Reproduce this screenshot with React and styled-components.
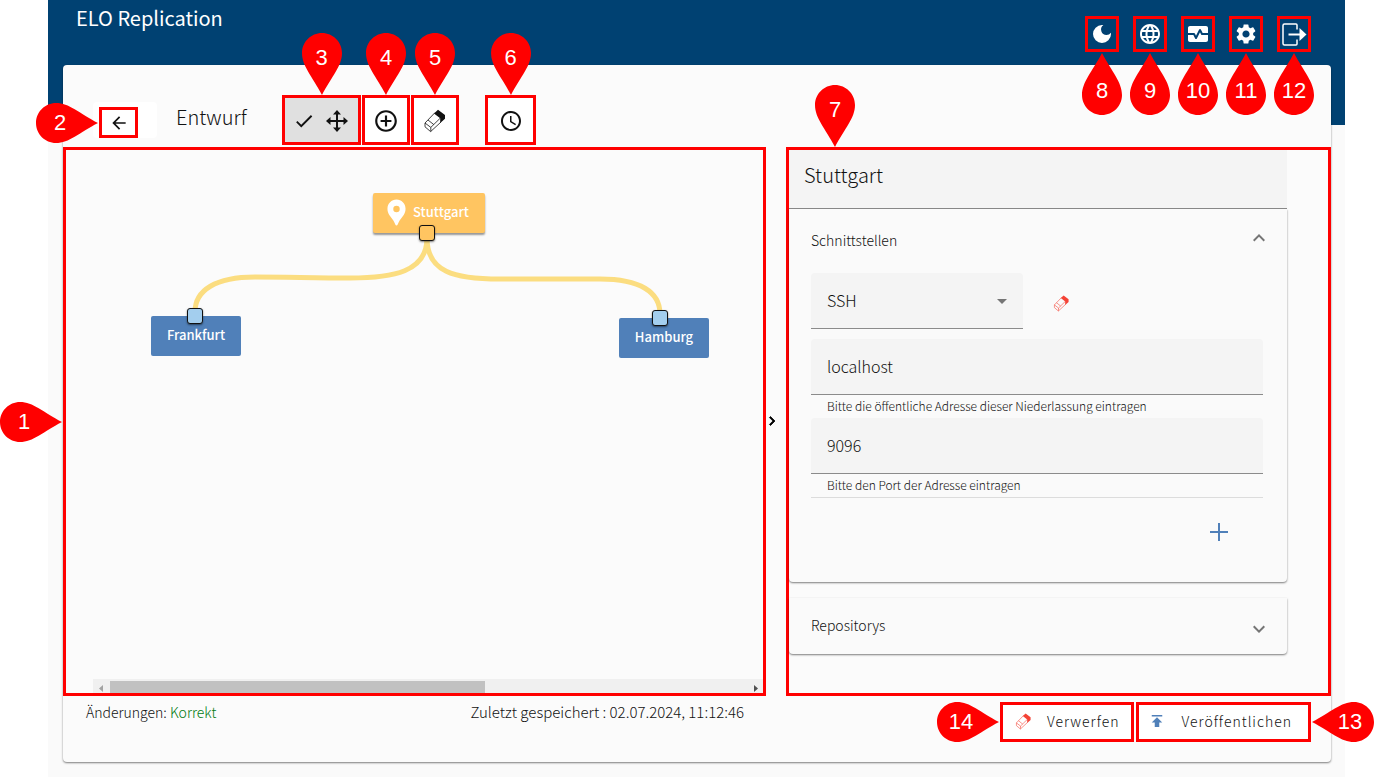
import React, { useState } from "react";
import styled, { createGlobalStyle, css } from "styled-components";
import {
  MdAddCircleOutline,
  MdArrowBack,
  MdArrowDropDown,
  MdCheck,
  MdChevronRight,
  MdDarkMode,
  MdExpandLess,
  MdExpandMore,
  MdLanguage,
  MdLocationPin,
  MdMonitorHeart,
  MdPublish,
  MdSchedule,
  MdSettings,
} from "react-icons/md";

const GlobalStyle = createGlobalStyle`
  *, *::before, *::after {
    box-sizing: border-box;
  }
  body {
    margin: 0;
    background: #fff;
    color: #111;
    font-family: "Noto Sans CJK SC", "Open Sans", sans-serif;
    font-size: 14px;
    font-weight: 300;
    line-height: 20px;
  }
  h1, h2 {
    margin: 0;
    font-weight: 400;
  }
  button, input, select {
    font: inherit;
    color: inherit;
  }
  svg {
    display: block;
  }
`;

const red = "#ff0000";

/* ---------- numbered markers ---------- */

const frame = css`
  position: relative;
  border: 3px solid ${red};
`;

const pinPlace = {
  down: css`
    left: ${(p) => p.$at || "50%"};
    bottom: 100%;
    margin: 0 0 3px -20px;
  `,
  up: css`
    left: ${(p) => p.$at || "50%"};
    top: 100%;
    margin: 4px 0 0 -20px;
  `,
  right: css`
    right: 100%;
    top: 50%;
    margin: -20px 4px 0 0;
  `,
  left: css`
    left: 100%;
    top: 50%;
    margin: -20px 0 0 4px;
  `,
};

const PinStyled = styled.span`
  position: absolute;
  z-index: 2;
  pointer-events: none;
  ${(p) => pinPlace[p.$point]}
`;

const PinNumber = styled.span`
  position: absolute;
  inset: 0;
  display: flex;
  align-items: center;
  justify-content: center;
  padding: ${(p) =>
    ({
      down: "0 0 12px",
      up: "14px 0 0",
      right: "0 14px 0 0",
      left: "0 0 0 14px",
    })[p.$point]};
  color: #fff;
  font: 22px/24px "Liberation Sans", Arial, sans-serif;
  letter-spacing: 0;
`;

const turn = {
  down: "",
  up: "rotate(180 20 31)",
  right: "translate(0 40) rotate(-90)",
  left: "translate(62 0) rotate(90)",
};

const Pin = ({ n, point, at }) => {
  const flat = point === "left" || point === "right";
  return (
    <PinStyled $point={point} $at={at}>
      <svg width={flat ? 62 : 40} height={flat ? 40 : 62} aria-hidden="true">
        <path
          fill={red}
          transform={turn[point] || undefined}
          d="M20 0C31 0 40 9 40 20C40 33 30 43 20 62C10 43 0 33 0 20C0 9 9 0 20 0Z"
        />
      </svg>
      <PinNumber $point={point}>{n}</PinNumber>
    </PinStyled>
  );
};

/* ---------- icons ---------- */

const Eraser = ({ size = 22, color = "currentColor" }) => (
  <svg width={size} height={size} viewBox="0 0 22 24" aria-hidden="true">
    <path
      d="M11 3.6L1 14V17.8L6.6 22.6L17 13M1 14L6.8 18.4L16.4 9M6.8 18.4V22.4M4 11L9.8 15.6"
      fill="none"
      stroke={color}
      strokeWidth="0.8"
      strokeLinejoin="round"
    />
    <path d="M14 .8L10 4.4L16.2 9.2V14L21 9.8V6Z" fill={color} />
  </svg>
);

const Move = () => (
  <svg width="22" height="22" viewBox="0 0 22 22" aria-hidden="true">
    <path d="M11 2V20M2 11H20" stroke="currentColor" strokeWidth="2" />
    <path
      d="M11 0L15 4.5H7ZM11 22L7 17.5H15ZM0 11L4.5 7V15ZM22 11L17.5 15V7Z"
      fill="currentColor"
    />
  </svg>
);

const Logout = () => (
  <svg width="25" height="23" viewBox="0 0 25 23" aria-hidden="true">
    <path
      d="M15 6.5V2Q15 1 14 1H2.5Q1 1 1 2.5V20.5Q1 22 2.5 22H14Q15 22 15 21V16.5"
      fill="none"
      stroke="currentColor"
      strokeWidth="1.5"
    />
    <path d="M6.5 11.5H19" stroke="currentColor" strokeWidth="2" />
    <path d="M17.5 5L24.5 11.5L17.5 18Z" fill="currentColor" />
  </svg>
);

const Plus = () => (
  <svg width="18" height="18" viewBox="0 0 18 18" aria-hidden="true">
    <path d="M9 0V18M0 9H18" stroke="currentColor" strokeWidth="2" />
  </svg>
);

/* ---------- page frame ---------- */

const Shell = styled.div`
  min-height: 100vh;
  margin: 0 30px 0 48px;
  background: #fafafa;
`;

const Header = styled.header`
  display: flex;
  align-items: flex-start;
  justify-content: space-between;
  height: 125px;
  padding: 0 34px 0 28px;
  background: #004172;
  color: #fff;
`;

const AppTitle = styled.h1`
  padding-top: 4px;
  font-size: 20px;
  line-height: 28px;
`;

const HeaderActions = styled.nav`
  display: flex;
  gap: 14px;
  padding-top: 16px;
`;

const HeaderButton = styled.button`
  ${frame}
  z-index: 1;
  display: flex;
  align-items: center;
  justify-content: center;
  width: 34px;
  height: 36px;
  padding: 0;
  background: none;
  color: #fff;
`;

const Card = styled.main`
  display: flex;
  flex-direction: column;
  min-height: calc(100vh - 80px);
  margin: -60px 14px 0 15px;
  padding-top: 30px;
  border-radius: 4px;
  background: #fbfbfb;
  box-shadow: 0 1px 2px rgba(0, 0, 0, 0.5);
`;

const Toolbar = styled.div`
  display: flex;
  align-items: flex-start;
  height: 52px;
  padding-left: 30px;
`;

const BackPlate = styled.div`
  margin: 7px 19px 0 0;
  padding: 5px 19px 0 6px;
  border-radius: 4px;
  background: #fff;
`;

const BackButton = styled.button`
  ${frame}
  display: flex;
  align-items: center;
  justify-content: center;
  width: 39px;
  height: 31px;
  padding: 0;
  background: #fff;
`;

const PageTitle = styled.h2`
  width: 105px;
  padding-top: 8px;
  font-size: 20px;
  font-weight: 300;
  line-height: 28px;
`;

const ToolButton = styled.button`
  ${frame}
  display: flex;
  align-items: center;
  justify-content: center;
  gap: 11px;
  width: ${(p) => (p.$wide ? 79 : p.$apart ? 51 : 48)}px;
  height: 50px;
  margin-left: ${(p) => (p.$apart ? 26 : 1)}px;
  padding: ${(p) => (p.$wide ? "2px 3px 0 0" : "2px 0 0")};
  background: ${(p) => (p.$active ? "#e0e0e0" : "#fff")};
`;

const split = css`
  display: grid;
  grid-template-columns: 703fr 20px 545fr;
`;

const Body = styled.div`
  ${split}
  flex: 1;
`;

/* ---------- canvas ---------- */

const CanvasPanel = styled.section`
  ${frame}
  display: flex;
  flex-direction: column;
  min-width: 0;
`;

const Canvas = styled.div`
  position: relative;
  flex: 1;
  min-height: 240px;
`;

const Wires = styled.svg`
  position: absolute;
  left: 0;
  top: 0;
`;

const Node = styled.button`
  position: absolute;
  left: ${(p) => p.$x}px;
  top: ${(p) => p.$y}px;
  display: flex;
  align-items: center;
  justify-content: center;
  gap: 1px;
  width: ${(p) => (p.$root ? 112 : 90)}px;
  height: 40px;
  padding: ${(p) => (p.$root ? "0 8px 2px 0" : "0 0 2px")};
  border: 0;
  border-radius: 2px;
  background: ${(p) => (p.$root ? "#ffc561" : "#5080b9")};
  box-shadow: ${(p) => (p.$root ? "0 2px 2px rgba(0, 0, 0, 0.4)" : "none")};
  color: #fff;
  font-size: 13px;
  font-weight: 500;
`;

const Port = styled.span`
  position: absolute;
  left: ${(p) => p.$x}px;
  top: ${(p) => p.$y}px;
  width: 16px;
  height: 16px;
  border: 1px solid #111;
  border-radius: 3px;
  background: ${(p) => (p.$root ? "#ffc561" : "#a3ceee")};
  box-shadow: 0 1px 2px rgba(0, 0, 0, 0.5);
`;

const ScrollTrack = styled.div`
  display: flex;
  align-items: center;
  height: 14px;
  margin-left: 27px;
  background: #f0f0f0;
`;

const ScrollArrow = styled.svg`
  flex: none;
  width: 17px;
  height: 13px;
  fill: ${(p) => (p.$off ? "#a3a3a3" : "#505050")};
`;

const ScrollRail = styled.div`
  flex: 1;
  padding-top: 2px;
`;

const ScrollThumb = styled.div`
  width: 59%;
  height: 12px;
  background: #c1c1c1;
`;

const Splitter = styled.button`
  display: flex;
  align-items: center;
  justify-content: center;
  padding: 0 8px 2px 0;
  border: 0;
  background: none;
  color: #000;

  svg {
    flex: none;
  }
  path:last-child {
    stroke: #000;
    stroke-width: 1;
  }
`;

/* ---------- detail panel ---------- */

const DetailPanel = styled.section`
  ${frame}
  padding-right: 41px;
  background: #fbfbfb;
`;

const fieldBox = css`
  width: 100%;
  height: 56px;
  padding: 0 16px 2px;
  border: 0;
  border-bottom: 1px solid #8b8b8b;
  border-radius: 4px 4px 0 0;
  background: #f4f4f4;
  font-size: 16px;
  outline: 0;
`;

const NameInput = styled.input`
  ${fieldBox}
  display: block;
  height: 59px;
  padding: 0 15px 9px;
  border-radius: 0;
  font-size: 20px;
`;

const Accordion = styled.div`
  margin-bottom: 16px;
  padding: 0 24px 0 22px;
  border-radius: 0 0 4px 4px;
  background: #fafafa;
  box-shadow: 0 1px 2px rgba(0, 0, 0, 0.5);
`;

const AccordionHead = styled.button`
  display: flex;
  align-items: center;
  justify-content: space-between;
  width: 100%;
  height: ${(p) => (p.$open ? 64 : 56)}px;
  padding: 0 0 2px;
  border: 0;
  background: none;
  text-align: left;

  svg {
    margin: ${(p) => (p.$open ? "0 -8px 4px 0" : "8px -8px 0 0")};
    color: #757575;
  }
`;

const InterfaceRow = styled.div`
  display: flex;
  align-items: center;
  gap: 30px;
  margin-bottom: 10px;
`;

const SelectWrap = styled.div`
  position: relative;
  width: 212px;

  svg {
    position: absolute;
    right: 9px;
    top: 16px;
    color: #757575;
    pointer-events: none;
  }
`;

const Select = styled.select`
  ${fieldBox}
  display: block;
  appearance: none;
`;

const ClearButton = styled.button`
  display: flex;
  padding: 4px 0 0;
  border: 0;
  background: none;
`;

const Field = styled.div`
  input {
    ${fieldBox}
    display: block;
  }
  label {
    display: block;
    height: 23px;
    padding: 1px 16px 0;
    font-size: 12px;
  }
`;

const AddRow = styled.div`
  display: flex;
  justify-content: flex-end;
  height: 85px;
  padding: 25px 35px 0 0;
  border-top: 1px solid #dcdcdc;
`;

const AddButton = styled.button`
  align-self: flex-start;
  padding: 0;
  border: 0;
  background: none;
  color: #5080b9;
`;

/* ---------- footer ---------- */

const Footer = styled.footer`
  ${split}
  height: 66px;
  padding-top: 6px;
`;

const Status = styled.div`
  display: flex;
  align-items: baseline;
  align-self: start;
  justify-content: space-between;
  padding: 0 22px 0 23px;
`;

const Valid = styled.span`
  color: #007a10;
`;

const Saved = styled.span`
  font-size: 15px;
`;

const FooterActions = styled.div`
  display: flex;
  grid-column: 3;
  justify-content: flex-end;
  gap: 2px;
  padding-right: 20px;
`;

const FooterButton = styled.button`
  ${frame}
  display: flex;
  align-items: center;
  gap: 15px;
  height: 40px;
  padding: ${(p) => (p.$main ? "0 16px 2px 9px" : "0 12px 2px 12px")};
  background: #fff;
  letter-spacing: 1px;
`;

const headerItems = [
  { n: 8, label: "Dunkles Design", icon: <MdDarkMode size={24} /> },
  { n: 9, label: "Sprache", icon: <MdLanguage size={24} /> },
  { n: 10, label: "Überwachung", icon: <MdMonitorHeart size={24} /> },
  { n: 11, label: "Einstellungen", icon: <MdSettings size={24} /> },
  { n: 12, label: "Abmelden", icon: <Logout /> },
];

const App = () => {
  const [name, setName] = useState("Stuttgart");
  const [address, setAddress] = useState("localhost");
  const [port, setPort] = useState("9096");

  return (
    <>
      <GlobalStyle />
      <Shell>
        <Header>
          <AppTitle>ELO Replication</AppTitle>
          <HeaderActions>
            {headerItems.map((item) => (
              <HeaderButton key={item.n} aria-label={item.label}>
                {item.icon}
                <Pin n={item.n} point="up" />
              </HeaderButton>
            ))}
          </HeaderActions>
        </Header>

        <Card>
          <Toolbar>
            <BackPlate>
              <BackButton aria-label="Zurück">
                <MdArrowBack size={20} />
                <Pin n={2} point="right" />
              </BackButton>
            </BackPlate>
            <PageTitle>Entwurf</PageTitle>
            <ToolButton $wide $active aria-label="Verschieben">
              <MdCheck size={22} />
              <Move />
              <Pin n={3} point="down" />
            </ToolButton>
            <ToolButton aria-label="Hinzufügen">
              <MdAddCircleOutline size={26} />
              <Pin n={4} point="down" />
            </ToolButton>
            <ToolButton aria-label="Löschen">
              <Eraser size={24} />
              <Pin n={5} point="down" />
            </ToolButton>
            <ToolButton $apart aria-label="Zeitplan">
              <MdSchedule size={24} />
              <Pin n={6} point="down" />
            </ToolButton>
          </Toolbar>

          <Body>
            <CanvasPanel>
              <Pin n={1} point="right" />
              <Canvas>
                <Wires width="660" height="220" aria-hidden="true">
                  <g fill="none" stroke="#fbdd80" strokeWidth="5">
                    <path d="M361 88C361 122 327 128 284 128C250 128 220 127 189 127C150 127 129 140 129 162" />
                    <path d="M361 88C361 122 388 129 434 129C480 129 510 129 534 129C574 129 594 142 594 164" />
                  </g>
                </Wires>
                <Node $root $x={307} $y={43}>
                  <MdLocationPin size={31} />
                  Stuttgart
                </Node>
                <Node $x={85} $y={166}>
                  Frankfurt
                </Node>
                <Node $x={553} $y={168}>
                  Hamburg
                </Node>
                <Port $root $x={353} $y={75} />
                <Port $x={121} $y={158} />
                <Port $x={586} $y={160} />
              </Canvas>
              <ScrollTrack>
                <ScrollArrow $off viewBox="0 0 17 13">
                  <path d="M10 5V12L6 8.5Z" />
                </ScrollArrow>
                <ScrollRail>
                  <ScrollThumb />
                </ScrollRail>
                <ScrollArrow viewBox="0 0 17 13">
                  <path d="M8 5V12L12 8.5Z" />
                </ScrollArrow>
              </ScrollTrack>
            </CanvasPanel>

            <Splitter aria-label="Seitenleiste einklappen">
              <MdChevronRight size={18} />
            </Splitter>

            <DetailPanel>
              <Pin n={7} point="down" at="46px" />
              <NameInput
                aria-label="Name"
                value={name}
                onChange={(e) => setName(e.target.value)}
              />
              <Accordion>
                <AccordionHead $open aria-expanded="true">
                  Schnittstellen
                  <MdExpandLess size={24} />
                </AccordionHead>
                <InterfaceRow>
                  <SelectWrap>
                    <Select aria-label="Schnittstelle" defaultValue="SSH">
                      <option>SSH</option>
                    </Select>
                    <MdArrowDropDown size={24} />
                  </SelectWrap>
                  <ClearButton aria-label="Schnittstelle löschen">
                    <Eraser size={17} color="#f44336" />
                  </ClearButton>
                </InterfaceRow>
                <Field>
                  <input
                    id="address"
                    value={address}
                    onChange={(e) => setAddress(e.target.value)}
                  />
                  <label htmlFor="address">
                    Bitte die öffentliche Adresse dieser Niederlassung eintragen
                  </label>
                </Field>
                <Field>
                  <input
                    id="port"
                    value={port}
                    onChange={(e) => setPort(e.target.value)}
                  />
                  <label htmlFor="port">Bitte den Port der Adresse eintragen</label>
                </Field>
                <AddRow>
                  <AddButton aria-label="Schnittstelle hinzufügen">
                    <Plus />
                  </AddButton>
                </AddRow>
              </Accordion>
              <Accordion>
                <AccordionHead aria-expanded="false">
                  Repositorys
                  <MdExpandMore size={24} />
                </AccordionHead>
              </Accordion>
            </DetailPanel>
          </Body>

          <Footer>
            <Status>
              <span>
                Änderungen: <Valid>Korrekt</Valid>
              </span>
              <Saved>Zuletzt gespeichert : 02.07.2024, 11:12:46</Saved>
            </Status>
            <FooterActions>
              <FooterButton>
                <Pin n={14} point="right" />
                <Eraser size={17} color="#f44336" />
                Verwerfen
              </FooterButton>
              <FooterButton $main>
                <MdPublish size={18} color="#5080b9" />
                Veröffentlichen
                <Pin n={13} point="left" />
              </FooterButton>
            </FooterActions>
          </Footer>
        </Card>
      </Shell>
    </>
  );
};

export default App;
